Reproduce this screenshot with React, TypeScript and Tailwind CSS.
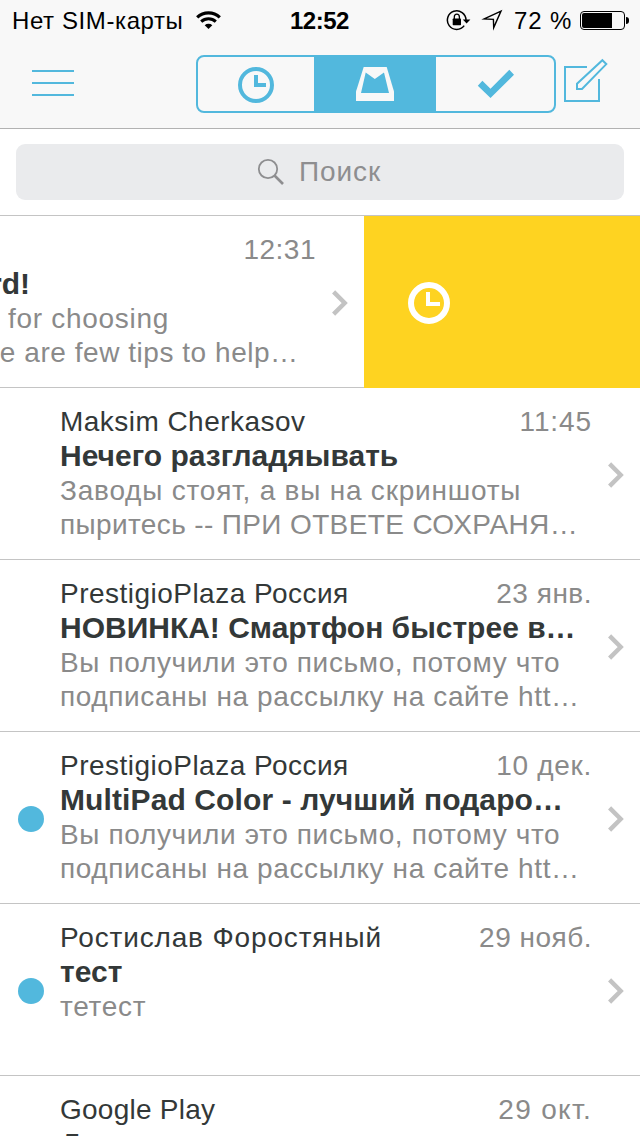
import type { ReactNode } from "react";

type Mail = {
  from: string;
  fromClass: string;
  date: string;
  dateClass: string;
  subject: string;
  subjectClass: string;
  preview: { text: string; className: string }[];
  unread?: boolean;
};

const mails: Mail[] = [
  {
    from: "Maksim Cherkasov",
    fromClass: "tracking-[0.46px]",
    date: "11:45",
    dateClass: "tracking-[0.9px]",
    subject: "Нечего разгладяывать",
    subjectClass: "",
    preview: [
      { text: "Заводы стоят, а вы на скриншоты", className: "tracking-[0.78px]" },
      { text: "пыритесь -- ПРИ ОТВЕТЕ СОХРАНЯ…", className: "tracking-[0.37px]" },
    ],
  },
  {
    from: "PrestigioPlaza Россия",
    fromClass: "tracking-[0.48px]",
    date: "23 янв.",
    dateClass: "tracking-[0.5px]",
    subject: "НОВИНКА! Смартфон быстрее в…",
    subjectClass: "",
    preview: [
      { text: "Вы получили это письмо, потому что", className: "tracking-[0.64px]" },
      { text: "подписаны на рассылку на сайте htt…", className: "tracking-[0.62px]" },
    ],
  },
  {
    from: "PrestigioPlaza Россия",
    fromClass: "tracking-[0.48px]",
    date: "10 дек.",
    dateClass: "tracking-[0.7px]",
    subject: "MultiPad Color - лучший подаро…",
    subjectClass: "tracking-[0.11px]",
    preview: [
      { text: "Вы получили это письмо, потому что", className: "tracking-[0.64px]" },
      { text: "подписаны на рассылку на сайте htt…", className: "tracking-[0.62px]" },
    ],
    unread: true,
  },
  {
    from: "Ростислав Форостяный",
    fromClass: "tracking-[0.84px]",
    date: "29 нояб.",
    dateClass: "tracking-[0.5px]",
    subject: "тест",
    subjectClass: "",
    preview: [{ text: "тетест", className: "tracking-[0.7px]" }],
    unread: true,
  },
  {
    from: "Google Play",
    fromClass: "tracking-[0.25px]",
    date: "29 окт.",
    dateClass: "tracking-[1.3px]",
    subject: "Д",
    subjectClass: "",
    preview: [],
  },
];

function Chevron() {
  return (
    <svg className="h-[26px] w-4 shrink-0" viewBox="0 0 16 26" fill="none">
      <path d="M1.6 1.9 12.7 13 1.6 24.1" stroke="#c3c3c3" strokeWidth="4.4" />
    </svg>
  );
}

function StatusBar() {
  return (
    <div className="flex h-10 items-start text-2xl leading-[28px] text-black">
      <div className="flex w-[290px] pt-[7px] pl-3">
        <span className="w-[184px] tracking-[0.6px] whitespace-nowrap">Нет SIM-карты</span>
        <svg className="mt-[3px] h-5 w-[26px]" viewBox="0 0 26 20" fill="none" stroke="#000">
          <path d="M1.2 7.4A16.4 16.4 0 0 1 23.8 7.4" strokeWidth="3.2" />
          <path d="M5.2 11.7A10.6 10.6 0 0 1 19.8 11.7" strokeWidth="3" />
          <path d="M12.5 19 8.7 15.2A5.6 5.6 0 0 1 16.3 15.2Z" fill="#000" stroke="none" />
        </svg>
      </div>
      <span className="w-[156px] pt-[7px] font-bold tracking-[-0.5px]">12:52</span>
      <svg className="mt-[9px] h-[22px] w-[26px]" viewBox="0 0 26 22" fill="none">
        <path d="M20 11A9.3 9.3 0 1 0 18.2 16.6" stroke="#000" strokeWidth="1.5" />
        <path d="M16.8 10.6H24.4L20.6 14.5Z" fill="#000" />
        <rect x="6.7" y="9.6" width="8.3" height="6.6" rx="0.6" fill="#000" />
        <path d="M8.3 10V8A2.55 2.9 0 0 1 13.4 8V10" stroke="#000" strokeWidth="1.3" />
      </svg>
      <svg className="mt-[9px] ml-[9px] h-[22px] w-[23px]" viewBox="0 0 23 22" fill="none">
        <path d="M3.2 9.9 20 2.1 12.7 18.6 12.4 10.3Z" stroke="#000" strokeWidth="1.4" strokeMiterlimit="8" />
      </svg>
      <span className="ml-[10px] w-[66px] pt-[7px] tracking-[0.9px] whitespace-nowrap">72 %</span>
      <div className="mt-[11px] flex items-center">
        <div className="h-[19px] w-[45px] rounded-[4px] border border-black p-px">
          <div className="h-full w-[30px] rounded-l-[2px] bg-black" />
        </div>
        <div className="ml-px h-[7px] w-[3px] rounded-r-[3px] bg-black" />
      </div>
    </div>
  );
}

function Segment({ active, className, children }: { active?: boolean; className: string; children: ReactNode }) {
  return (
    <button className={`${className} flex items-center justify-center ${active ? "bg-[#52b8dd]" : ""}`}>
      {children}
    </button>
  );
}

function Toolbar() {
  return (
    <div className="flex h-[88px] items-start pt-[15px]">
      <button className="mt-[15px] ml-8 flex w-[42px] flex-col gap-[10px]">
        <span className="h-0.5 w-full bg-[#52b8dd]" />
        <span className="h-0.5 w-full bg-[#52b8dd]" />
        <span className="h-0.5 w-full bg-[#52b8dd]" />
      </button>
      <div className="ml-[122px] flex h-[58px] w-[360px] overflow-hidden rounded-lg border-2 border-[#52b8dd]">
        <Segment className="w-[116px]">
          <svg className="mt-0.5 h-9 w-9" viewBox="0 0 36 36" fill="none" stroke="#52b8dd" strokeWidth="4">
            <circle cx="18" cy="18" r="16" />
            <path d="M18 8V18H28" />
          </svg>
        </Segment>
        <Segment active className="w-[122px]">
          <svg className="h-[34px] w-[38px]" viewBox="0 0 38 34">
            <path d="M7.7 0H30.7L38 24.5V34H0V24.5Z" fill="#f8f8f8" />
            <path d="M9.7 5.5 18.8 12 28 5.5 33 26H5Z" fill="#52b8dd" />
          </svg>
        </Segment>
        <Segment className="w-[118px]">
          <svg className="-mt-px ml-0.5 h-[30px] w-[38px]" viewBox="0 0 38 30">
            <path d="M.8 16.8 5.4 11.8 13.5 19.8 32.3.8 37 5.7 13.5 29.1Z" fill="#52b8dd" />
          </svg>
        </Segment>
      </div>
      <svg className="mt-0.5 ml-2 h-[46px] w-[46px]" viewBox="0 0 46 46" fill="none" stroke="#52b8dd" strokeWidth="2">
        <path d="M23 10H1V44H35V22" />
        <path d="M38.4 3.2 42.3 7.1 18 32H13V26.8Z" />
      </svg>
    </div>
  );
}

function SearchBar() {
  return (
    <div className="flex h-[86px] shrink-0 bg-white px-4 pt-[15px]">
      <div className="flex h-14 w-full items-center rounded-[9px] bg-[#eaebed] pl-[241px]">
        <svg className="h-7 w-7" viewBox="0 0 28 28" fill="none" stroke="#8e8e90">
          <circle cx="11" cy="11" r="9.2" strokeWidth="1.8" />
          <path d="M17.5 17.5 26 26" strokeWidth="2.6" />
        </svg>
        <span className="ml-[14px] text-[28px] leading-[34px] tracking-[0.9px] text-[#8e8e90]">Поиск</span>
      </div>
    </div>
  );
}

function SwipedRow() {
  return (
    <div className="flex h-[172px] shrink-0">
      <div className="flex w-[364px] overflow-hidden border-b border-[#c4c4c4] bg-white">
        <div className="w-[331px] shrink-0 pt-[17px] text-[28px] leading-[34px] whitespace-nowrap text-[#8a8a8a]">
          <div className="pr-[15px] text-right tracking-[0.5px]">12:31</div>
          <div className="mb-0.5 -ml-[10px] text-[30px] leading-[33px] font-bold text-[#333838]">rd!</div>
          <div className="pl-2 tracking-[0.7px]">for choosing</div>
          <div className="-ml-[10px] tracking-[0.54px]">re are few tips to help…</div>
        </div>
        <div className="pt-[74px] pl-px">
          <Chevron />
        </div>
      </div>
      <div className="flex w-[276px] items-start bg-[#fed321] pt-[66px] pl-[44px]">
        <svg className="h-[42px] w-[42px]" viewBox="0 0 42 42" fill="none" stroke="#fff">
          <circle cx="21" cy="21" r="18" strokeWidth="6" />
          <path d="M20 10V22H32" strokeWidth="4" />
        </svg>
      </div>
    </div>
  );
}

function MailRow({ mail }: { mail: Mail }) {
  return (
    <div className="flex h-[172px] shrink-0 border-b border-[#c4c4c4] bg-white">
      <div className="w-[60px] shrink-0 pt-[74px] pl-[18px]">
        {mail.unread && <div className="h-[26px] w-[26px] rounded-full bg-[#52b8dd]" />}
      </div>
      <div className="w-[532px] shrink-0 pt-[17px] text-[28px] leading-[34px] whitespace-nowrap text-[#8a8a8a]">
        <div className="flex justify-between">
          <span className={`text-[#333838] ${mail.fromClass}`}>{mail.from}</span>
          <span className={mail.dateClass}>{mail.date}</span>
        </div>
        <div className={`mb-0.5 text-[30px] leading-[33px] font-bold text-[#333838] ${mail.subjectClass}`}>
          {mail.subject}
        </div>
        {mail.preview.map((line) => (
          <div key={line.text} className={line.className}>
            {line.text}
          </div>
        ))}
      </div>
      <div className="pt-[74px] pl-4">
        <Chevron />
      </div>
    </div>
  );
}

export default function App() {
  return (
    <div className="flex h-[1136px] w-[640px] flex-col overflow-hidden bg-white font-['Liberation_Sans',Arial,sans-serif]">
      <header className="h-[129px] shrink-0 border-b border-[#b2b2b2] bg-[#f8f8f8]">
        <StatusBar />
        <Toolbar />
      </header>
      <SearchBar />
      <main className="flex flex-col border-t border-[#c4c4c4]">
        <SwipedRow />
        {mails.map((mail) => (
          <MailRow key={mail.date} mail={mail} />
        ))}
      </main>
    </div>
  );
}
